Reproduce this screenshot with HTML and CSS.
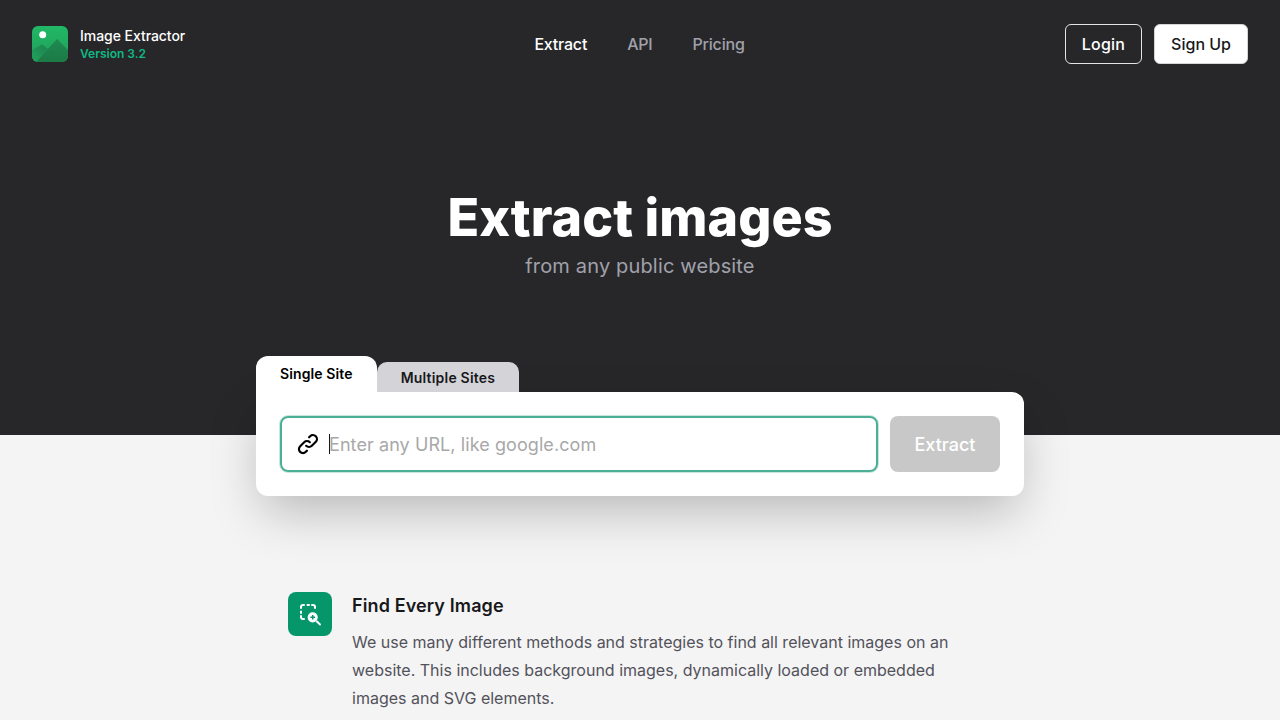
FILE: index.html
```html
<!DOCTYPE html>
<html lang="en">
<head>
<meta charset="utf-8">
<title>Image Extractor</title>
<link rel="stylesheet" href="styles.css">
</head>
<body>
<section class="hero">
  <header class="topbar">
    <a class="brand" href="#">
      <svg class="brand-logo" viewBox="0 0 36 36" aria-hidden="true">
        <defs>
          <linearGradient id="lg" x1="0" y1="0" x2="0" y2="1">
            <stop offset="0" stop-color="#22b866"/>
            <stop offset="1" stop-color="#1f9d59"/>
          </linearGradient>
          <linearGradient id="lm" x1="0" y1="0" x2="0" y2="1">
            <stop offset="0" stop-color="#1f8a50"/>
            <stop offset="1" stop-color="#1c7a47"/>
          </linearGradient>
          <linearGradient id="ls" gradientUnits="userSpaceOnUse" x1="16" y1="22" x2="4" y2="36">
            <stop offset="0" stop-color="#1e8550"/>
            <stop offset="1" stop-color="#21a05c"/>
          </linearGradient>
          <clipPath id="lc"><rect width="36" height="36" rx="6"/></clipPath>
        </defs>
        <rect width="36" height="36" rx="6" fill="url(#lg)"/>
        <g clip-path="url(#lc)">
          <circle cx="10.700" cy="8.700" r="3.500" fill="#fff"/>
          <path d="M4 36 L25 13 L36 24 V36Z" fill="url(#lm)"/>
          <path d="M0 24 L10 18.500 L16 23 L4 36 H0Z" fill="url(#ls)"/>
        </g>
      </svg>
      <span class="brand-text">
        <span class="brand-name">Image Extractor</span>
        <span class="brand-version">Version 3.2</span>
      </span>
    </a>
    <nav class="nav">
      <a class="nav-link active" href="#">Extract</a>
      <a class="nav-link" href="#">API</a>
      <a class="nav-link" href="#">Pricing</a>
    </nav>
    <div class="auth">
      <a class="btn btn-outline" href="#">Login</a>
      <a class="btn btn-solid" href="#">Sign Up</a>
    </div>
  </header>
  <div class="headline">
    <h1>Extract images</h1>
    <p>from any public website</p>
  </div>
</section>
<main class="content">
  <div class="panel">
    <div class="tabs">
      <button class="tab tab-active">Single Site</button>
      <button class="tab">Multiple Sites</button>
    </div>
    <form class="card">
      <label class="field">
        <svg class="field-icon" viewBox="0 0 24 24" fill="none" stroke="currentColor" stroke-width="2.200" stroke-linecap="round" stroke-linejoin="round" aria-hidden="true">
          <path d="M13.828 10.172a4 4 0 00-5.656 0l-4 4a4 4 0 105.656 5.656l1.102-1.101m-.758-4.899a4 4 0 005.656 0l4-4a4 4 0 00-5.656-5.656l-1.100 1.100"/>
        </svg>
        <span class="caret"></span>
        <input class="url" type="text" placeholder="Enter any URL, like google.com">
      </label>
      <button class="submit" type="button">Extract</button>
    </form>
  </div>
  <article class="feature">
    <div class="feature-icon">
      <svg viewBox="0 0 24 24" fill="none" stroke="#fff" stroke-width="2" stroke-linecap="round" stroke-linejoin="round" aria-hidden="true">
        <path d="M3 6V5a2 2 0 0 1 2-2h1M9.500 3h1.500M14 3h1a2 2 0 0 1 2 2v1M3 9.500V11M3 14v1a2 2 0 0 0 2 2h1"/>
        <circle cx="14.700" cy="15.300" r="4.400" fill="#fff" stroke="#fff" stroke-width="1.400"/>
        <path d="M14.700 13v4.600M12.400 15.300H17" stroke="#059669" stroke-width="1.500" stroke-linecap="butt"/>
        <path d="M19 19.500l3 3"/>
      </svg>
    </div>
    <div class="feature-body">
      <h2>Find Every Image</h2>
      <p>We use many different methods and strategies to find all relevant images on an website. This includes background images, dynamically loaded or embedded images and SVG elements.</p>
    </div>
  </article>
</main>
</body>
</html>
```
FILE: styles.css
```css
* { box-sizing: border-box; }
html, body { margin: 0; height: 100%; overflow: hidden; }
body { background: #f4f4f4; font-family: Inter, "Liberation Sans", sans-serif; color: #18181b; }
a { text-decoration: none; color: inherit; }

.hero { background: #27272a; height: 435px; }
.topbar { display: grid; grid-template-columns: 1fr auto 1fr; align-items: center; padding: 24px 32px 0; }
.brand { display: flex; align-items: center; gap: 12px; }
.brand-logo { width: 36px; height: 36px; display: block; }
.brand-text { display: flex; flex-direction: column; }
.brand-name { font-size: 14px; line-height: 20px; font-weight: 500; color: #fff; letter-spacing: -0.05px; }
.brand-version { font-size: 12px; line-height: 16px; font-weight: 600; color: #10b981; }
.nav { display: flex; gap: 40px; margin-left: -1px; }
.nav-link { font-size: 16px; line-height: 24px; font-weight: 500; color: #a1a1aa; letter-spacing: -0.2px; }
.nav-link.active { color: #fff; }
.auth { display: flex; justify-content: flex-end; gap: 12px; }
.btn { height: 40px; padding: 0 16px; display: flex; align-items: center; border: 1px solid #e4e4e7; border-radius: 6px; font-size: 16px; font-weight: 500; }
.btn-outline { color: #fff; letter-spacing: 0.2px; }
.btn-solid { background: #fff; color: #18181b; border-color: #d4d4d8; }

.headline { text-align: center; padding-top: 124px; }
.headline h1 { margin: 0; font-size: 52px; line-height: 60px; font-weight: 800; color: #fff; letter-spacing: 0.05px; }
.headline p { margin: 4px 0 0; font-size: 20px; line-height: 28px; color: #a1a1aa; letter-spacing: 0.16px; }

.content { display: flex; flex-direction: column; align-items: center; }
.panel { width: 768px; margin-top: -79px; }
.tabs { display: flex; align-items: flex-end; }
.tab { border: 0; font-family: inherit; font-size: 14px; font-weight: 600; letter-spacing: 0.2px; color: #18181b; background: #d4d4d8; height: 30px; padding: 0 24px; border-radius: 10px 10px 0 0; }
.tab-active { background: #fff; height: 36px; padding-bottom: 2px; color: #000; border-radius: 12px 12px 0 0; letter-spacing: 0.11px; }
.card { display: flex; gap: 12px; padding: 24px; background: #fff; border-radius: 0 12px 12px 12px; box-shadow: 0 20px 50px -6px rgba(0, 0, 0, .25); }
.field { flex: 1; height: 56px; display: flex; align-items: center; padding: 0 0 0 14px; border: 2px solid #4cae94; border-radius: 8px; box-shadow: 0 0 0 1px rgba(76, 174, 148, .3); color: #000; }
.field-icon { width: 24px; height: 24px; flex: none; margin-right: 9px; }
.caret { width: 1px; height: 20px; background: #18181b; flex: none; }
.url { flex: 1; min-width: 0; border: 0; outline: 0; padding: 0; font-family: inherit; font-size: 18px; letter-spacing: 0.08px; color: #18181b; background: none; margin-left: -1px; }
.url::placeholder { color: #a8a8a8; opacity: 1; }
.submit { width: 110px; height: 56px; border: 0; border-radius: 8px; background: #c8c8c8; color: #fff; font-family: inherit; font-size: 18px; font-weight: 500; }

.feature { width: 704px; display: flex; gap: 20px; margin-top: 96px; }
.feature-icon { width: 44px; height: 44px; flex: none; display: flex; align-items: center; justify-content: center; background: #059669; border-radius: 8px; }
.feature-icon svg { width: 24px; height: 24px; display: block; }
.feature-body h2 { margin: 0; font-size: 18px; line-height: 28px; font-weight: 600; color: #18181b; letter-spacing: 0.12px; }
.feature-body p { margin: 8px 0 0; font-size: 16px; line-height: 28px; color: #52525b; }
```
